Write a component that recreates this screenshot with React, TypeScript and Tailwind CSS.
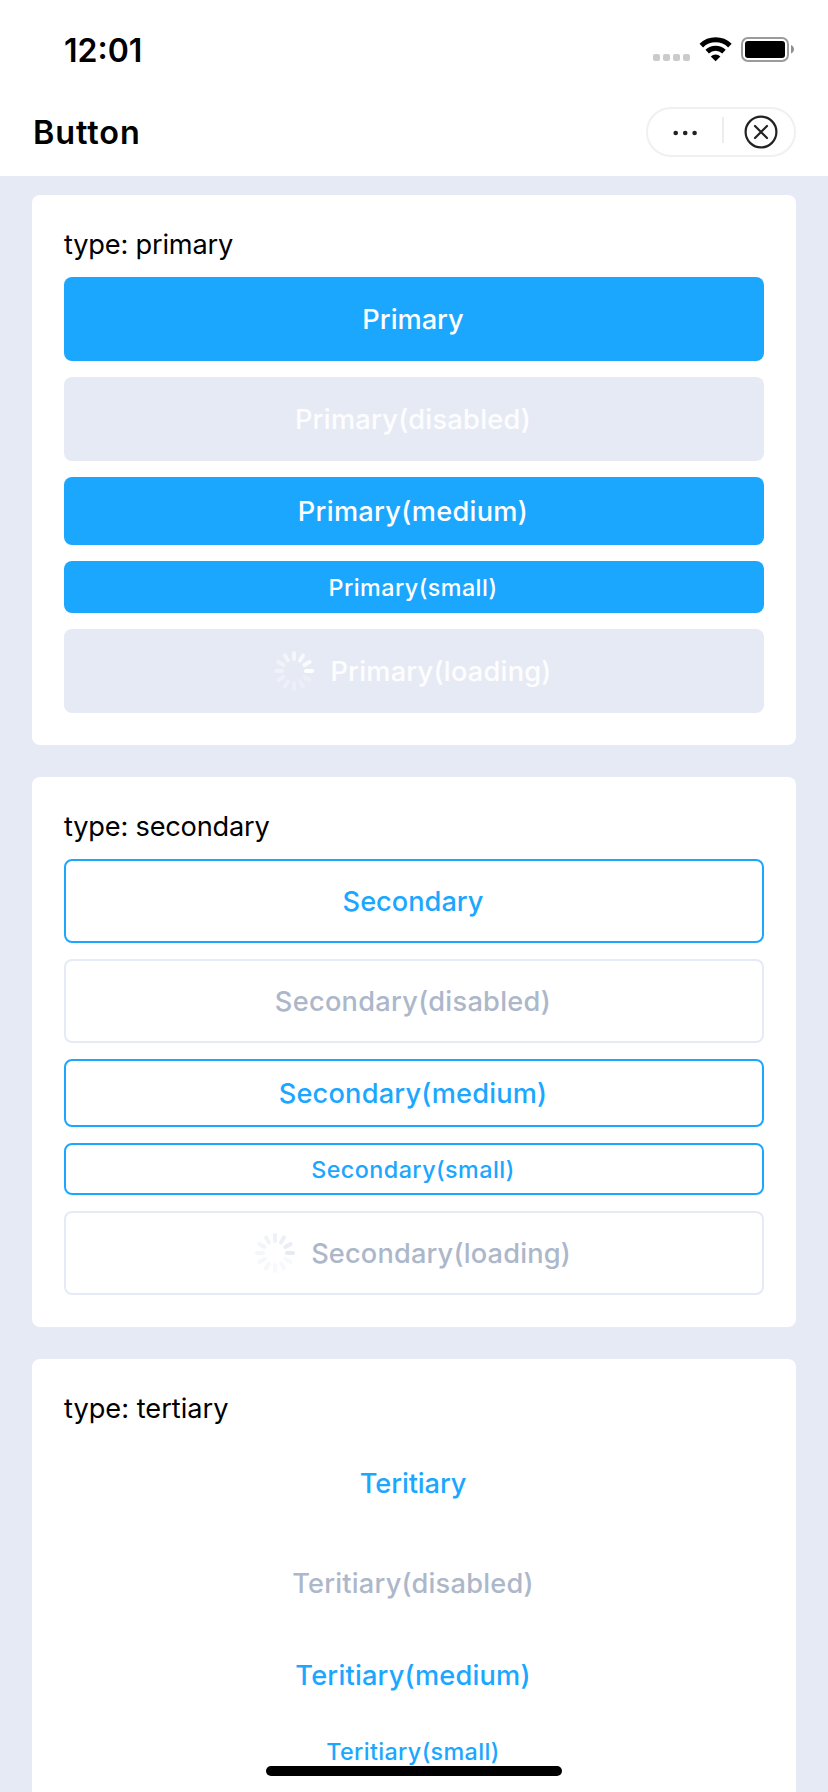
import React from "react";
import clsx from "clsx";

type Variant = "primary" | "secondary" | "tertiary";
type Size = "large" | "medium" | "small";

interface ButtonProps {
  variant: Variant;
  label: string;
  tracking: string;
  size?: Size;
  disabled?: boolean;
  loading?: boolean;
}

const sizes: Record<Size, string> = {
  large: "h-[84px] text-[27.2px]",
  medium: "h-[68px] text-[27.2px]",
  small: "h-[52px] text-[23.3px]",
};

const enabledStyles: Record<Variant, string> = {
  primary: "bg-[#1ca7ff] text-white",
  secondary: "border-2 border-[#1ca7ff] text-[#1ca7ff]",
  tertiary: "text-[#1ca7ff]",
};

const disabledStyles: Record<Variant, string> = {
  primary: "bg-[#e6eaf5] text-white/90",
  secondary: "border-2 border-[#e6eaf5] text-[#adb7ca]",
  tertiary: "text-[#adb7ca]",
};

const spokeOpacity = [1, 0.85, 0.73, 0.63, 0.54, 0.46, 0.4, 0.35, 0.3, 0.27, 0.25, 0.25];

function Spinner({ color }: { color: string }) {
  return (
    <svg viewBox="-20 -20 40 40" className="size-10 shrink-0">
      {spokeOpacity.map((opacity, i) => (
        <line
          key={i}
          x1="12"
          y1="0"
          x2="18"
          y2="0"
          stroke={color}
          strokeWidth="4"
          strokeLinecap="round"
          opacity={opacity}
          transform={`rotate(${-30 * i})`}
        />
      ))}
    </svg>
  );
}

function Button({ variant, label, tracking, size = "large", disabled, loading }: ButtonProps) {
  const inactive = disabled || loading;
  return (
    <button
      disabled={inactive}
      className={clsx(
        "flex w-full shrink-0 items-center justify-center gap-4 rounded-lg pr-0.5 font-medium whitespace-nowrap",
        sizes[size],
        inactive ? disabledStyles[variant] : enabledStyles[variant],
      )}
    >
      {loading && <Spinner color={variant === "primary" ? "#ffffff" : "#e6eaf5"} />}
      <span className={clsx("pt-0.5", tracking)}>{label}</span>
    </button>
  );
}

function Card({ title, tracking, children }: { title: string; tracking: string; children: React.ReactNode }) {
  return (
    <section className="flex shrink-0 flex-col gap-4 rounded-lg bg-white p-8">
      <h2 className={clsx("h-[34px] text-[27.2px] leading-9", tracking)}>{title}</h2>
      {children}
    </section>
  );
}

function StatusBar() {
  return (
    <div className="flex h-[88px] items-start justify-between pt-[30px] pr-[33px] pl-16">
      <span className="text-[32px] leading-[41px] font-[580]">12:01</span>
      <svg viewBox="653 36 142 28" className="mt-1.5 h-7 w-[142px]">
        {[653, 663, 673, 683].map((x) => (
          <rect key={x} x={x} y="54" width="7" height="7" rx="2" fill="#cbcbcb" />
        ))}
        <g fill="none" stroke="#000">
          <path d="M701.3 45.6 A20.6 20.6 0 0 1 729.9 45.6" strokeWidth="5" />
          <path d="M707.2 51.6 A12.2 12.2 0 0 1 724 51.6" strokeWidth="5" />
        </g>
        <path d="M715.6 61.2 L710.8 56.5 A7 7 0 0 1 720.4 56.5 Z" />
        <rect x="742" y="38" width="46" height="23" rx="6" fill="none" stroke="#9b9b9b" strokeWidth="2" />
        <rect x="745" y="41" width="40" height="17" rx="3" />
        <path d="M791 45 C795 46.5 795 52 791 53.5 Z" fill="#8f8f8f" />
      </svg>
    </div>
  );
}

function TitleBar() {
  return (
    <div className="flex h-[88px] items-center justify-between pr-8 pl-[33px]">
      <h1 className="pt-0.5 text-[32.4px] leading-10 font-[580] tracking-[0.9px]">Button</h1>
      <svg viewBox="0 0 150 50" className="h-[50px] w-[150px]" fill="none">
        <rect x="1" y="1" width="148" height="48" rx="24" stroke="#f0f0f0" strokeWidth="2" />
        <path d="M77 10 V36" stroke="#ededed" strokeWidth="2" />
        <g fill="#222">
          <circle cx="29.7" cy="26" r="2.3" />
          <circle cx="39.2" cy="26" r="2.3" />
          <circle cx="48.6" cy="26" r="2.3" />
        </g>
        <g stroke="#222" strokeWidth="2.2" strokeLinecap="round">
          <circle cx="115" cy="25" r="15.4" />
          <path d="M109 19 L121 31 M121 19 L109 31" />
        </g>
      </svg>
    </div>
  );
}

export default function App() {
  return (
    <div className="relative flex h-[1792px] w-[828px] flex-col overflow-hidden bg-[#e6eaf5] font-['Inter',sans-serif] text-black">
      <header className="h-44 shrink-0 bg-white">
        <StatusBar />
        <TitleBar />
      </header>
      <main className="flex flex-col gap-8 px-8 pt-[19px]">
        <Card title="type: primary" tracking="tracking-[-0.2px]">
          <Button variant="primary" label="Primary" tracking="tracking-[0px]" />
          <Button variant="primary" label="Primary(disabled)" tracking="tracking-[0.28px]" disabled />
          <Button variant="primary" label="Primary(medium)" tracking="tracking-[0.3px]" size="medium" />
          <Button variant="primary" label="Primary(small)" tracking="tracking-[0.48px]" size="small" />
          <Button variant="primary" label="Primary(loading)" tracking="tracking-[0.24px]" loading />
        </Card>
        <Card title="type: secondary" tracking="tracking-[-0.2px]">
          <Button variant="secondary" label="Secondary" tracking="tracking-[0px]" />
          <Button variant="secondary" label="Secondary(disabled)" tracking="tracking-[0.28px]" disabled />
          <Button variant="secondary" label="Secondary(medium)" tracking="tracking-[0.2px]" size="medium" />
          <Button variant="secondary" label="Secondary(small)" tracking="tracking-[0.46px]" size="small" />
          <Button variant="secondary" label="Secondary(loading)" tracking="tracking-[0.16px]" loading />
        </Card>
        <Card title="type: tertiary" tracking="tracking-[0px]">
          <Button variant="tertiary" label="Teritiary" tracking="tracking-[-0.1px]" />
          <Button variant="tertiary" label="Teritiary(disabled)" tracking="tracking-[0.22px]" disabled />
          <Button variant="tertiary" label="Teritiary(medium)" tracking="tracking-[0.2px]" size="medium" />
          <Button variant="tertiary" label="Teritiary(small)" tracking="tracking-[0.37px]" size="small" />
        </Card>
      </main>
      <div className="absolute bottom-4 left-[266px] h-2.5 w-[296px] rounded-full bg-black" />
    </div>
  );
}
